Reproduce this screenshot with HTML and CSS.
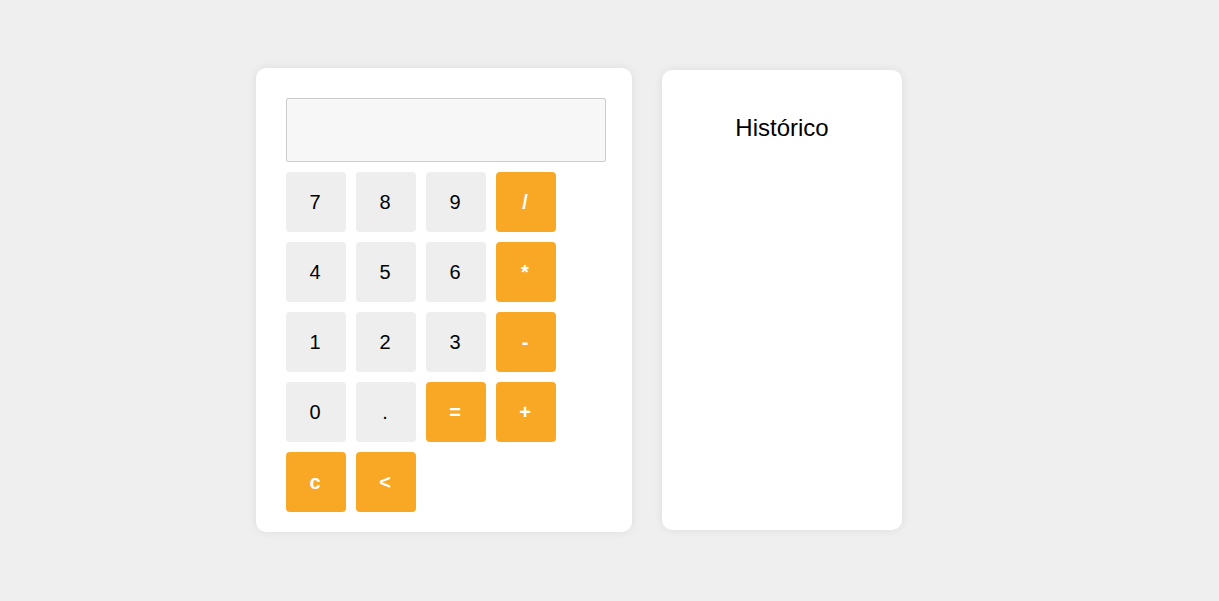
FILE: index.html
```html
<!DOCTYPE html>
<html>
<head>
  <title>Calculadora</title>
  <link rel="stylesheet" href="styles.css">
</head>
<body>
  <div class="wrapper">
    <div class="calculator">
      <input type="text" class="display" readonly>
      <div class="keys">
        <button class="key">7</button>
        <button class="key">8</button>
        <button class="key">9</button>
        <button class="key op">/</button>
        <button class="key">4</button>
        <button class="key">5</button>
        <button class="key">6</button>
        <button class="key op">*</button>
        <button class="key">1</button>
        <button class="key">2</button>
        <button class="key">3</button>
        <button class="key op">-</button>
        <button class="key">0</button>
        <button class="key">.</button>
        <button class="key op">=</button>
        <button class="key op">+</button>
        <button class="key op">c</button>
        <button class="key op">&lt;</button>
      </div>
    </div>

    <div class="history">
      <h2>Histórico</h2>
      <ul class="history-list"></ul>
    </div>
  </div>
</body>
</html>
```

FILE: styles.css
```css
html, body {
  margin: 0;
  height: 100%;
}

body {
  box-sizing: border-box;
  background-color: #efefef;
  font-family: "Liberation Sans", Arial, sans-serif;
  display: flex;
  align-items: center;
  justify-content: center;
  padding-right: 61px;
  padding-bottom: 1px;
}

.wrapper {
  display: flex;
  align-items: center;
  gap: 30px;
}

/* Калькулятор */
.calculator {
  background-color: #fff;
  border-radius: 10px;
  box-shadow: 0 0 10px rgba(0, 0, 0, 0.08);
  padding: 30px 26px 20px 30px;
  width: 320px;
}

.display {
  display: block;
  box-sizing: border-box;
  width: 320px;
  height: 64px;
  background-color: #f7f7f7;
  border: 1px solid #ccc;
  border-radius: 2px;
  margin: 0 0 10px 0;
  font-size: 24px;
  text-align: right;
  padding: 0 10px;
}

.keys {
  display: grid;
  grid-template-columns: repeat(4, 60px);
  gap: 10px;
}

.key {
  width: 60px;
  height: 60px;
  border: none;
  border-radius: 4px;
  background-color: #eee;
  color: #000;
  font-family: "Liberation Sans", Arial, sans-serif;
  font-size: 20px;
  padding: 0 2px 0 0;
  cursor: pointer;
}

.key.op {
  background-color: #f9a825;
  color: #fff;
  font-weight: bold;
}

/* История */
.history {
  box-sizing: border-box;
  background-color: #fff;
  border-radius: 10px;
  box-shadow: 0 0 10px rgba(0, 0, 0, 0.08);
  width: 240px;
  height: 460px;
  padding: 30px 20px;
}

.history h2 {
  font-size: 24px;
  font-weight: normal;
  text-align: center;
  margin: 14px 0 0 0;
}

.history-list {
  list-style: none;
  margin: 0;
  padding: 0;
}
```
